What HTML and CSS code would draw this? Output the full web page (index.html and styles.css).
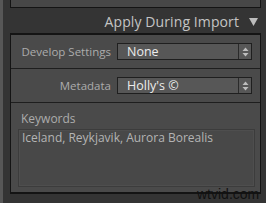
FILE: index.html
```html
<!DOCTYPE html>
<html lang="en">
<head>
  <meta charset="UTF-8">
  <title>Apply During Import</title>
  <link rel="stylesheet" href="styles.css">
</head>
<body>
  <div class="frame">
    <div class="edge"></div>
    <div class="panel">
      <div class="prev-box"></div>
      <div class="head">
        <span class="head-title">Apply During Import</span>
        <svg class="head-arrow" width="9" height="8" viewBox="0 0 9 8"><path d="M0 0 H9 L4.5 8 Z" fill="#bcbcbc"/></svg>
      </div>
      <div class="box">
        <div class="row">
          <label class="lbl">Develop Settings</label>
          <div class="popup"><span class="popup-val">None</span><span class="stepper"><svg width="7" height="10" viewBox="0 0 7 10"><path d="M3.5 0.5 L6.5 4 H0.5 Z M3.5 9.5 L6.5 6 H0.5 Z" fill="#bdbdbd"/></svg></span></div>
        </div>
        <div class="row">
          <label class="lbl">Metadata</label>
          <div class="popup"><span class="popup-val">Holly's &copy;</span><span class="stepper"><svg width="7" height="10" viewBox="0 0 7 10"><path d="M3.5 0.5 L6.5 4 H0.5 Z M3.5 9.5 L6.5 6 H0.5 Z" fill="#bdbdbd"/></svg></span></div>
        </div>
        <div class="keys">
          <div class="keys-lbl">Keywords</div>
          <div class="keys-area">Iceland, Reykjavik, Aurora Borealis</div>
        </div>
      </div>
    </div>
  </div>
  <div class="mark">wtvid.com</div>
</body>
</html>
```

FILE: styles.css
```css
* { box-sizing: border-box; }
body { margin: 0; width: 266px; height: 203px; overflow: hidden; background: #343434; font-family: "Open Sans", "DejaVu Sans", sans-serif; position: relative; }
.frame { display: flex; height: 203px; }
.edge { width: 3px; background: #575757; margin-right: 7px; }
.panel { width: 251px; }
.prev-box { height: 8px; background: #474747; border: 1px solid #141414; border-top: none; }
.head { height: 25px; display: flex; align-items: center; justify-content: flex-end; padding-right: 3px; color: #c4c4c4; }
.head-title { font-size: 14px; letter-spacing: 0.1px; margin-right: 10px; margin-top: 1px; }
.head-arrow { margin-top: 2px; }
.box { background: #4a4a4a; border: 1px solid #141414; border-top-width: 2px; border-bottom-width: 2px; height: 161px; }
.row { height: 34px; display: flex; align-items: center; border-bottom: 1px solid #1e1e1e; }
.lbl { width: 100px; text-align: right; font-size: 11.5px; color: #acacac; }
.popup { margin-left: 6px; width: 135px; height: 17px; background: #575757; border: 1px solid #1f1f1f; display: flex; align-items: center; }
.popup-val { flex: 1; padding-left: 9px; font-size: 12.5px; color: #ececec; }
.stepper { width: 13px; height: 100%; border-left: 1px solid #2a2a2a; display: flex; align-items: center; justify-content: center; }
.keys { padding: 7px 5px 0 7px; }
.keys-lbl { font-size: 12px; color: #acacac; padding-left: 3px; height: 19px; }
.keys-area { height: 58px; border: 1px solid #3c3c3c; box-shadow: inset 0 0 0 1px #4e4e4e; background: #484848; font-size: 12px; color: #b4b4b4; padding: 0 3px; line-height: 15px; }
.mark { position: absolute; left: 197px; top: 186px; font-family: "Liberation Sans", sans-serif; font-size: 14px; color: #111; }
```
